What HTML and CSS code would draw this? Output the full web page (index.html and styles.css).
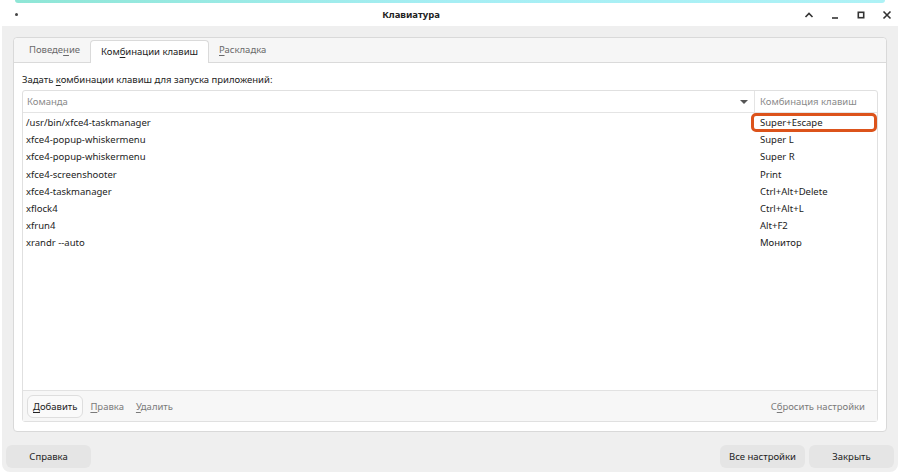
FILE: index.html
```html
<!DOCTYPE html>
<html lang="ru">
<head>
<meta charset="UTF-8" />
<meta name="viewport" content="width=device-width, initial-scale=1" />
<title>Клавиатура</title>
<link rel="stylesheet" href="styles.css">
</head>
<body>

  <div class="panel-strip"></div>

  <div class="window">
    <div class="titlebar">
      <span class="menu-dot"></span>
      <div class="title">Клавиатура</div>
      <div class="controls">
        <svg width="10" height="10" viewBox="0 0 10 10"><path d="M1.5 7 L5 3.5 L8.5 7" fill="none" stroke="#333" stroke-width="1.6"/></svg>
        <svg width="10" height="10" viewBox="0 0 10 10"><path d="M2 8 H8" stroke="#333" stroke-width="1.6"/></svg>
        <svg width="10" height="10" viewBox="0 0 10 10"><rect x="2.3" y="2.3" width="5.4" height="5.4" fill="none" stroke="#333" stroke-width="1.6"/></svg>
        <svg width="10" height="10" viewBox="0 0 10 10"><path d="M1.5 1.5 L8.5 8.5 M8.5 1.5 L1.5 8.5" stroke="#333" stroke-width="1.6"/></svg>
      </div>
    </div>

    <div class="body">
      <div class="notebook">
        <div class="tabs">
          <div class="tab first">Поведе<u>н</u>ие</div>
          <div class="tab active">Ком<u>б</u>инации клавиш</div>
          <div class="tab"><u>Р</u>аскладка</div>
        </div>

        <div class="page">
          <div class="label">Задать <u>к</u>омбинации клавиш для запуска приложений:</div>

          <div class="tree">
            <div class="tree-head">
              <div class="col-cmd">Команда <span class="sort-arrow"></span></div>
              <div class="col-key">Комбинация клавиш</div>
            </div>
            <div class="rows">
              <div class="row"><div class="col-cmd">/usr/bin/xfce4-taskmanager</div><div class="col-key marked">Super+Escape</div></div>
              <div class="row"><div class="col-cmd">xfce4-popup-whiskermenu</div><div class="col-key">Super L</div></div>
              <div class="row"><div class="col-cmd">xfce4-popup-whiskermenu</div><div class="col-key">Super R</div></div>
              <div class="row"><div class="col-cmd">xfce4-screenshooter</div><div class="col-key">Print</div></div>
              <div class="row"><div class="col-cmd">xfce4-taskmanager</div><div class="col-key">Ctrl+Alt+Delete</div></div>
              <div class="row"><div class="col-cmd">xflock4</div><div class="col-key">Ctrl+Alt+L</div></div>
              <div class="row"><div class="col-cmd">xfrun4</div><div class="col-key">Alt+F2</div></div>
              <div class="row"><div class="col-cmd">xrandr --auto</div><div class="col-key">Монитор</div></div>
            </div>
            <div class="tree-bar">
              <button class="bar-btn primary"><u>Д</u>обавить</button>
              <button class="bar-btn"><u>П</u>равка</button>
              <button class="bar-btn"><u>У</u>далить</button>
              <button class="bar-btn reset">С<u>б</u>росить настройки</button>
            </div>
          </div>
        </div>
      </div>

      <div class="dialog-buttons">
        <button class="dlg-btn">Справка</button>
        <div class="spacer"></div>
        <button class="dlg-btn">Все настройки</button>
        <button class="dlg-btn">Закрыть</button>
      </div>
    </div>
  </div>

</body>
</html>
```

FILE: styles.css
```css
body {
  margin: 0;
  background: #ffffff;
  font-family: "Noto Sans", "Open Sans", sans-serif;
  font-size: 9.5px;
  color: #222;
}
u {
  text-decoration: underline;
  text-underline-offset: 2px;
}
.panel-strip {
  height: 3px;
  margin: 0 15px;
  border-radius: 0 0 3px 3px;
  background: linear-gradient(to right, #8fe6d6, #a6eef4 50%, #aef2f6);
}
.window {
  margin-left: 2px;
  width: 896px;
  height: 469px;
  display: flex;
  flex-direction: column;
  background: #efefef;
  border-radius: 0 0 8px 8px;
}
.titlebar {
  height: 24px;
  background: #ffffff;
  display: flex;
  align-items: center;
  position: relative;
}
.menu-dot {
  width: 3px;
  height: 3px;
  border-radius: 50%;
  background: #444;
  margin-left: 13px;
}
.title {
  position: absolute;
  left: 0;
  right: 78px;
  text-align: center;
  font-weight: 700;
  color: #222;
  pointer-events: none;
}
.controls {
  margin-left: auto;
  display: flex;
  gap: 16px;
  margin-right: 6px;
  padding-top: 1px;
}
.controls svg {
  display: block;
}
.body {
  flex: 1;
  display: flex;
  flex-direction: column;
  padding: 11px 4px 4px;
}
.notebook {
  margin: 0 7px;
  height: 393px;
  display: flex;
  flex-direction: column;
  background: #ffffff;
  border: 1px solid #d9d9d9;
  border-radius: 4px;
}
.tabs {
  height: 24px;
  display: flex;
  background: #f6f6f6;
  border-bottom: 1px solid #dadada;
  border-radius: 4px 4px 0 0;
}
.tab {
  line-height: 24px;
  color: #6a6a6a;
  padding-left: 10px;
  width: 60px;
}
.tab.first {
  padding-left: 15px;
  width: 61px;
}
.tab.active {
  background: #ffffff;
  color: #222;
  margin-top: 2px;
  line-height: 22px;
  margin-bottom: -1px;
  border: 1px solid #dadada;
  border-bottom: none;
  border-radius: 4px 4px 0 0;
  width: 107px;
  padding-left: 10px;
}
.page {
  flex: 1;
  display: flex;
  flex-direction: column;
  padding: 9px 8px 9px 8px;
}
.label {
  line-height: 16px;
  margin-bottom: 2px;
}
.tree {
  flex: 1;
  display: flex;
  flex-direction: column;
  border: 1px solid #e0e0e0;
  border-radius: 3px;
}
.tree-head {
  height: 21px;
  display: flex;
  border-bottom: 1px solid #e4e4e4;
  color: #8a8a8a;
  line-height: 21px;
}
.col-cmd {
  flex: 1;
  padding-left: 4px;
  position: relative;
}
.col-key {
  width: 117px;
  padding-left: 5px;
}
.tree-head .col-cmd {
  border-right: 1px solid #e4e4e4;
}
.sort-arrow {
  position: absolute;
  right: 6px;
  top: 9px;
  border-left: 4px solid transparent;
  border-right: 4px solid transparent;
  border-top: 4px solid #555;
}
.rows {
  flex: 1;
  padding-top: 1px;
}
.row {
  display: flex;
  height: 17.2px;
  line-height: 17px;
}
.row .col-cmd {
  padding-left: 3px;
}
.row .col-key {
  padding-left: 4px;
}
.marked {
  position: relative;
}
.marked::after {
  content: "";
  position: absolute;
  left: -5px;
  right: 0;
  top: -1px;
  bottom: -1px;
  border: 3px solid #dc531b;
  border-radius: 5px;
}
.tree-bar {
  height: 30px;
  display: flex;
  align-items: center;
  background: #f7f7f7;
  border-top: 1px solid #e2e2e2;
  padding: 0 4px;
}
.bar-btn {
  font-family: inherit;
  font-size: 9.5px;
  background: none;
  border: 1px solid transparent;
  color: #7a7a7a;
  height: 23px;
  padding: 0 5px;
  border-radius: 6px;
  white-space: nowrap;
}
.bar-btn.primary {
  background: #fafafa;
  border-color: #dedede;
  color: #222;
  padding: 0 5px;
  margin-right: 1px;
}
.bar-btn.reset {
  margin-left: auto;
  margin-right: 2px;
}
.dialog-buttons {
  display: flex;
  gap: 4px;
  margin-top: 13px;
}
.spacer {
  flex: 1;
}
.dlg-btn {
  font-family: inherit;
  font-size: 9.5px;
  width: 85px;
  height: 23px;
  border: none;
  border-radius: 6px;
  background: #e5e5e5;
  color: #222;
  white-space: nowrap;
}
```
